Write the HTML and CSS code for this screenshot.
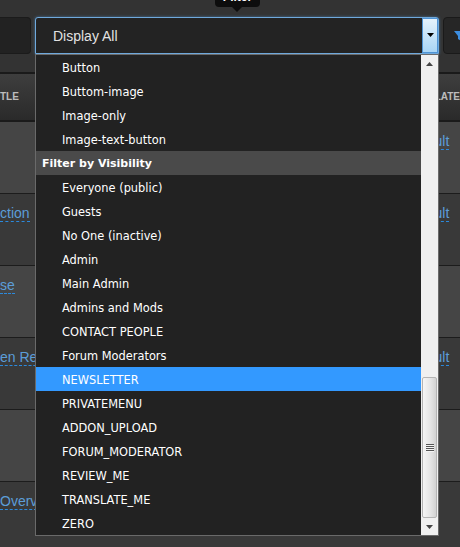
FILE: index.html
```html
<!DOCTYPE html>
<html>
<head>
<meta charset="utf-8">
<link rel="stylesheet" href="styles.css">
</head>
<body>
<div class="page">
  <div class="toolbar">
    <div class="search"></div>
    <div class="select">
      <span class="select-value">Display All</span>
      <span class="select-arrow"><svg width="8" height="5" viewBox="0 0 8 5"><path d="M0 0h7L3.5 4z" fill="#000"/></svg></span>
    </div>
    <div class="filter-btn"><svg width="12" height="12" viewBox="0 0 12 12"><path d="M0 1h11L7 6v5L4 9V6z" fill="#3d8ee0"/></svg></div>
  </div>

  <div class="grid">
    <div class="row head"><div class="cell-left">TLE</div><div class="cell-right">TRANSLATE</div></div>
    <div class="row light"><div class="cell-left"></div><div class="cell-right"><span class="link">Default</span></div></div>
    <div class="row dark"><div class="cell-left"><span class="link">ction</span></div><div class="cell-right"><span class="link">Default</span></div></div>
    <div class="row light"><div class="cell-left"><span class="link">se</span></div><div class="cell-right"></div></div>
    <div class="row dark"><div class="cell-left"><span class="link">en Ref</span></div><div class="cell-right"><span class="link">Default</span></div></div>
    <div class="row light"><div class="cell-left"></div><div class="cell-right"></div></div>
    <div class="row dark"><div class="cell-left"><span class="link">Overv</span></div><div class="cell-right"></div></div>
  </div>

  <div class="tooltip">Filter</div>

  <div class="dropdown">
    <ul class="options">
      <li class="opt">Button</li>
      <li class="opt">Buttom-image</li>
      <li class="opt">Image-only</li>
      <li class="opt">Image-text-button</li>
      <li class="group">Filter by Visibility</li>
      <li class="opt">Everyone (public)</li>
      <li class="opt">Guests</li>
      <li class="opt">No One (inactive)</li>
      <li class="opt">Admin</li>
      <li class="opt">Main Admin</li>
      <li class="opt">Admins and Mods</li>
      <li class="opt">CONTACT PEOPLE</li>
      <li class="opt">Forum Moderators</li>
      <li class="opt selected">NEWSLETTER</li>
      <li class="opt">PRIVATEMENU</li>
      <li class="opt">ADDON_UPLOAD</li>
      <li class="opt">FORUM_MODERATOR</li>
      <li class="opt">REVIEW_ME</li>
      <li class="opt">TRANSLATE_ME</li>
      <li class="opt">ZERO</li>
    </ul>
    <div class="scrollbar">
      <div class="sb-btn"><svg width="7" height="4" viewBox="0 0 7 4"><path d="M3.5 0L7 4H0z" fill="#444"/></svg></div>
      <div class="sb-track">
        <div class="sb-thumb"><span class="grip"></span></div>
      </div>
      <div class="sb-btn"><svg width="7" height="4" viewBox="0 0 7 4"><path d="M0 0h7L3.5 4z" fill="#444"/></svg></div>
    </div>
  </div>
</div>
</body>
</html>
```

FILE: styles.css
```css
* { box-sizing: border-box; }
html, body { margin: 0; padding: 0; }
body {
  background: #333;
  font-family: "Liberation Sans", Arial, sans-serif;
  width: 460px;
  height: 547px;
  overflow: hidden;
}
.page {
  position: relative;
  width: 460px;
  height: 547px;
  overflow: hidden;
}

/* toolbar */
.toolbar {
  display: flex;
  align-items: flex-start;
  gap: 4px;
  height: 72px;
  padding-top: 17px;
}
.search {
  width: 31px;
  height: 37px;
  background: #222;
  border: 1px solid #1b1b1b;
  border-left: none;
  border-radius: 0 4px 4px 0;
  flex: none;
}
.select {
  flex: none;
  width: 404px;
  height: 37px;
  background: #232323;
  border: 1px solid #6fa9dc;
  box-shadow: 0 0 3px rgba(90, 160, 230, 0.55);
  border-radius: 3px 3px 0 0;
  display: flex;
  align-items: stretch;
}
.select-value {
  flex: 1;
  color: #e2e2e2;
  font-size: 14px;
  line-height: 35px;
  padding-top: 1px;
  padding-left: 17px;
}
.select-arrow {
  width: 16px;
  border: 1px solid #4e93d4;
  background: linear-gradient(#e4f2fc, #a9d5f5);
  display: flex;
  align-items: center;
  justify-content: center;
}
.select-arrow svg { display: block; margin-left: 1px; }
.filter-btn {
  flex: none;
  width: 40px;
  height: 37px;
  background: #262626;
  border: 1px solid #1a1a1a;
  border-radius: 4px;
  display: flex;
  align-items: center;
  padding-left: 10px;
}
.filter-btn svg { display: block; }

/* table behind */
.grid { display: flex; flex-direction: column; }
.row {
  display: flex;
  justify-content: space-between;
  height: 72px;
  border-bottom: 1px solid #1c1c1c;
  padding-top: 9px;
}
.row.head {
  height: 50px;
  padding-top: 0;
  border-top: 2px solid #1a1a1a;
  border-bottom: 2px solid #1a1a1a;
  background: linear-gradient(#3e3e3e, #2a2a2a);
  align-items: center;
  color: #bdbdbd;
  font-size: 10px;
  font-weight: bold;
}
.row.light { background: #454545; }
.row.dark { background: #393939; }
.cell-left {
  width: 120px;
  line-height: 20px;
  font-size: 14px;
  white-space: nowrap;
}
.cell-right {
  width: 55px;
  line-height: 20px;
  font-size: 14px;
  white-space: nowrap;
}
.row.head .cell-left { font-size: 10px; line-height: 14px; }
.row.head .cell-right {
  font-size: 10px;
  line-height: 14px;
  width: 64px;
  text-align: right;
}
.link {
  color: #5c9dd8;
  border-bottom: 1px dashed #2b89dc;
}

/* tooltip */
.tooltip {
  position: absolute;
  left: 215px;
  top: -13px;
  width: 45px;
  height: 20px;
  background: #0d0d0d;
  border-radius: 4px;
  color: #fff;
  font-size: 12px;
  font-weight: bold;
  line-height: 20px;
  text-align: center;
}
.tooltip::after {
  content: "";
  position: absolute;
  left: 17px;
  bottom: -5px;
  border-left: 5px solid transparent;
  border-right: 5px solid transparent;
  border-top: 5px solid #0d0d0d;
}

/* dropdown list */
.dropdown {
  position: absolute;
  left: 35px;
  top: 54px;
  width: 404px;
  height: 482px;
  background: #222;
  border: 1px solid #6a6a6a;
  display: flex;
}
.options {
  list-style: none;
  margin: 0;
  padding: 0;
  flex: 1;
  font-family: "DejaVu Sans", Verdana, sans-serif;
  font-size: 11.4px;
  color: #fff;
}
.options li {
  height: 24px;
  line-height: 24px;
  padding-top: 1px;
  white-space: nowrap;
}
.opt { padding-left: 26px; }
.group {
  padding-left: 6px;
  background: #4a4a4a;
  font-weight: bold;
  font-size: 11px;
}
.opt.selected { background: #3399ff; }

.scrollbar {
  width: 17px;
  flex: none;
  background: #f0f0f0;
  display: flex;
  flex-direction: column;
}
.sb-btn {
  height: 17px;
  display: flex;
  align-items: center;
  justify-content: center;
}
.sb-btn svg { display: block; }
.sb-track {
  flex: 1;
  display: flex;
  flex-direction: column;
  justify-content: flex-end;
}
.sb-thumb {
  height: 141px;
  margin: 0 1px;
  border: 1px solid #b4b4b4;
  border-radius: 2px;
  background: linear-gradient(to right, #f6f6f6, #e6e6e6 55%, #d2d2d2);
  display: flex;
  align-items: center;
  justify-content: center;
}
.grip {
  width: 8px;
  height: 8px;
  background: repeating-linear-gradient(#555 0 1px, #f4f4f4 1px 2px);
}
```
